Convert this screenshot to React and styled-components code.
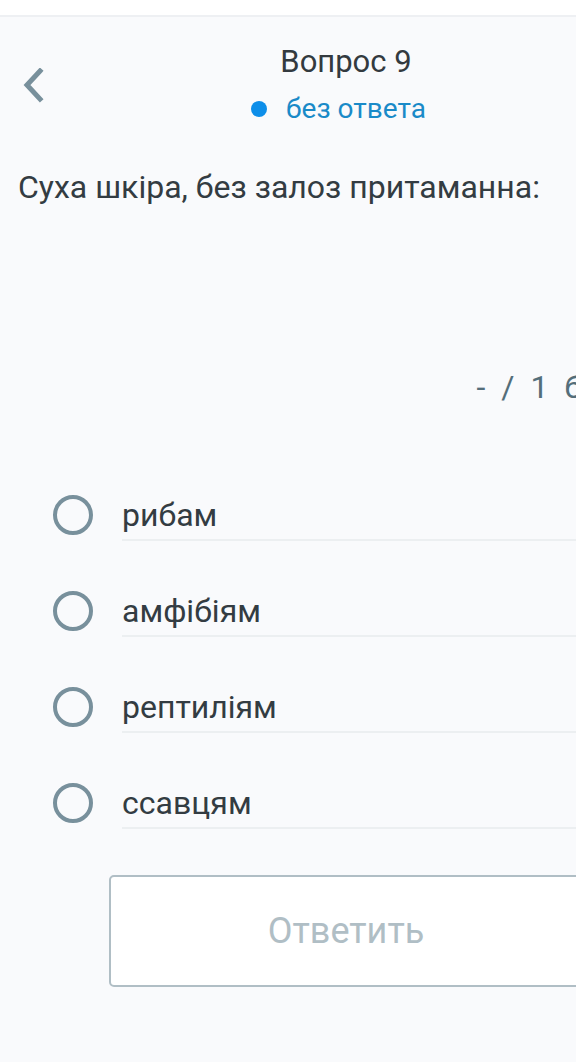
import React from 'react';
import styled, { createGlobalStyle } from 'styled-components';

const Global = createGlobalStyle`
  html, body { margin: 0; padding: 0; background: #f9fafc; overflow: hidden; }
  body { font-family: Roboto, "Noto Sans", sans-serif; }
`;

const Page = styled.div`
  width: 692px;
  min-height: 1062px;
  background: #f9fafc;
`;

const TopStrip = styled.div`
  height: 15px;
  background: #ffffff;
  border-bottom: 2px solid #eef0f3;
`;

const Header = styled.header`
  display: grid;
  grid-template-columns: 1fr auto 1fr;
  align-items: center;
  padding-top: 28px;
`;

const BackButton = styled.button`
  justify-self: start;
  margin-left: 20px;
  padding: 0;
  border: 0;
  background: none;
  width: 30px;
  height: 36px;
  display: flex;
  align-items: center;
  justify-content: center;
`;

const TitleBlock = styled.div`
  display: flex;
  flex-direction: column;
  align-items: center;
`;

const Title = styled.div`
  font-size: 31px;
  line-height: 34px;
  color: #333a3f;
`;

const Status = styled.div`
  margin-top: 13px;
  padding-right: 15px;
  display: flex;
  align-items: center;
  gap: 19px;
  font-size: 28px;
  line-height: 34px;
  color: #1a8ac8;
`;

const Dot = styled.span`
  width: 16px;
  height: 16px;
  border-radius: 50%;
  background: #0d8ee9;
`;

const Question = styled.div`
  margin: 44px 0 0 18px;
  font-size: 32px;
  line-height: 34px;
  color: #333c42;
`;

const Score = styled.div`
  margin-top: 166px;
  padding-right: 62px;
  text-align: right;
  font-size: 32px;
  line-height: 34px;
  letter-spacing: 4px;
  color: #546e7a;
`;

const Options = styled.div`
  margin-top: 89px;
  display: flex;
  flex-direction: column;
  gap: 48px;
`;

const Option = styled.label`
  display: flex;
  align-items: flex-start;
  padding-left: 53px;
  gap: 29px;
`;

const Radio = styled.span`
  flex: none;
  box-sizing: border-box;
  margin-top: 2px;
  width: 40px;
  height: 40px;
  border-radius: 50%;
  border: 4px solid #78909c;
`;

const OptionText = styled.span`
  flex: 1;
  padding: 5px 0 7px;
  font-size: 32px;
  line-height: 34px;
  color: #333c42;
  border-bottom: 2px solid #eceff1;
`;

const SubmitButton = styled.button`
  display: block;
  box-sizing: border-box;
  margin: 46px 0 0 109px;
  width: 474px;
  height: 112px;
  background: #ffffff;
  border: 2px solid #b0bec5;
  border-radius: 5px;
  font-family: Roboto, "Noto Sans", sans-serif;
  font-size: 36px;
  color: #b0bec5;
`;

const options = ['рибам', 'амфібіям', 'рептиліям', 'ссавцям'];

export default function App() {
  return (
    <Page>
      <Global />
      <TopStrip />
      <Header>
        <BackButton aria-label="Назад">
          <svg width="30" height="36" viewBox="0 0 30 36">
            <path d="M20 3 L7 17 L20 31" fill="none" stroke="#78909c" strokeWidth="5" strokeLinecap="square" strokeLinejoin="miter" />
          </svg>
        </BackButton>
        <TitleBlock>
          <Title>Вопрос 9</Title>
          <Status>
            <Dot />
            без ответа
          </Status>
        </TitleBlock>
        <div />
      </Header>
      <Question>Суха шкіра, без залоз притаманна:</Question>
      <Score>- / 1 бал</Score>
      <Options>
        {options.map((o) => (
          <Option key={o}>
            <Radio />
            <OptionText>{o}</OptionText>
          </Option>
        ))}
      </Options>
      <SubmitButton>Ответить</SubmitButton>
    </Page>
  );
}
